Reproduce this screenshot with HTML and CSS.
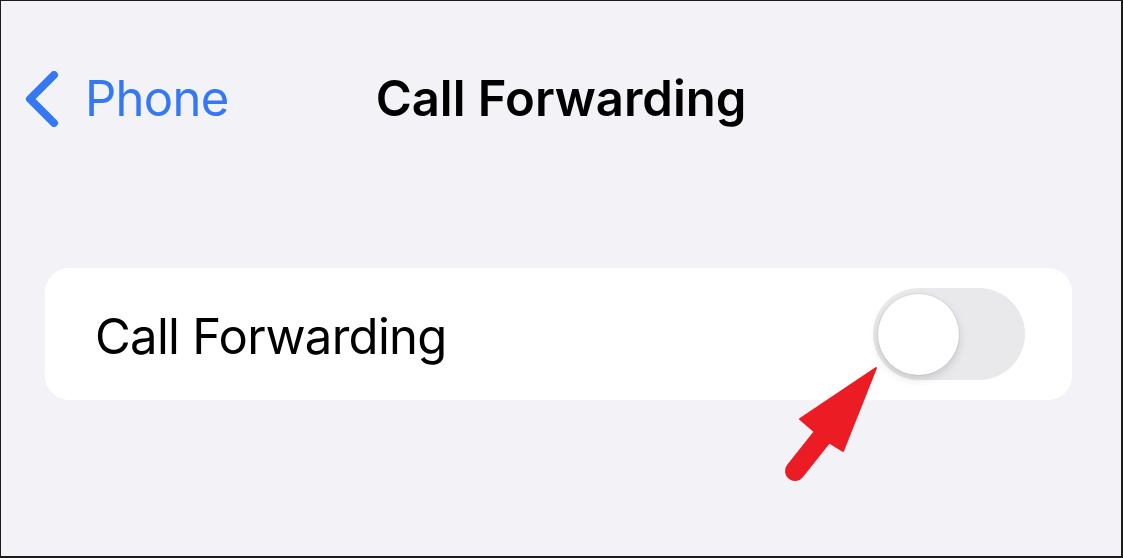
FILE: index.html
```html
<!DOCTYPE html>
<html lang="en">
<head>
<meta charset="UTF-8">
<meta name="viewport" content="width=device-width, initial-scale=1.0">
<title>Call Forwarding</title>
<link rel="stylesheet" href="styles.css">
</head>
<body>
<div class="screen">
  <header class="nav">
    <a class="back" href="#">
      <svg class="chevron" width="34" height="56" viewBox="0 0 34 56">
        <path d="M29 4 L5 28 L29 52" fill="none" stroke="currentColor" stroke-width="8" stroke-linecap="round" stroke-linejoin="round"/>
      </svg>
      <span>Phone</span>
    </a>
    <h1 class="title">Call Forwarding</h1>
    <div></div>
  </header>

  <div class="group">
    <div class="row">
      <span class="row-label">Call Forwarding</span>
      <label class="switch">
        <input type="checkbox">
        <span class="knob"></span>
      </label>
    </div>
  </div>

  <!-- red pointer arrow -->
  <svg class="pointer" width="110" height="130" viewBox="0 0 110 130">
    <path d="M102 12 L69 95 L56 87 L40 75 L26 63 Z" fill="#ec1c24" stroke="#ec1c24" stroke-width="2" stroke-linejoin="round"/>
    <line x1="48" y1="81" x2="21" y2="115" stroke="#ec1c24" stroke-width="20" stroke-linecap="round"/>
  </svg>
</div>
</body>
</html>
```

FILE: styles.css
```css
body {
  margin: 0;
  background: #fff;
  font-family: Inter, "Noto Sans", sans-serif;
}

.screen {
  position: relative;
  width: 1123px;
  height: 558px;
  box-sizing: border-box;
  background: #f2f2f7;
  border-style: solid;
  border-color: #1c1c1c;
  border-width: 1px 2px 2px 1px;
  overflow: hidden;
}

.nav {
  display: grid;
  grid-template-columns: 1fr auto 1fr;
  align-items: center;
  padding-top: 69px;
}

.back {
  display: flex;
  align-items: center;
  gap: 26px;
  padding-left: 24px;
  color: #3478f6;
  text-decoration: none;
  font-size: 49px;
  line-height: 58px;
  letter-spacing: -0.7px;
}

.chevron {
  display: block;
}

.title {
  margin: 0;
  font-size: 49px;
  line-height: 58px;
  font-weight: 600;
  letter-spacing: 0;
  color: #000;
}

.group {
  margin: 140px 49px 0 44px;
  background: #fff;
  border-radius: 24px;
}

.row {
  display: flex;
  align-items: center;
  justify-content: space-between;
  height: 132px;
  padding: 0 47px 0 50px;
}

.row-label {
  font-size: 49px;
  letter-spacing: -0.7px;
  color: #000;
  padding-top: 4px;
}

.switch {
  position: relative;
  display: block;
  width: 152px;
  height: 92px;
  border-radius: 46px;
  background: #e9e9eb;
}

.switch input {
  display: none;
}

.knob {
  position: absolute;
  left: 5px;
  top: 6px;
  width: 81px;
  height: 81px;
  border-radius: 50%;
  background: #fff;
  box-shadow: 0 0 0 1px rgba(0, 0, 0, 0.05), 0 4px 10px rgba(0, 0, 0, 0.14);
}

.pointer {
  position: absolute;
  left: 773px;
  top: 355px;
}
```
